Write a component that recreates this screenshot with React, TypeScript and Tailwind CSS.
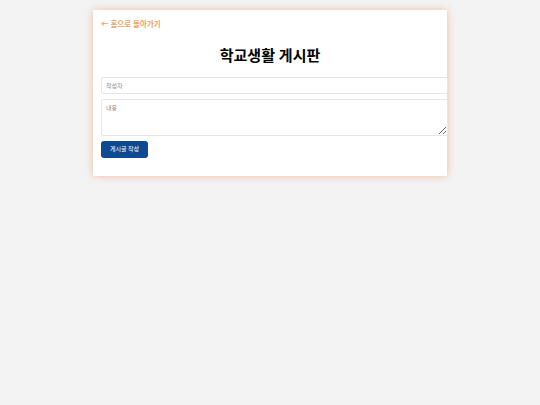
import React from "react";

const App: React.FC = () => {
  return (
    <div className="min-h-[405px] bg-[#f3f3f3] pt-[10px] font-['Noto_Sans','Noto_Sans_CJK_KR',sans-serif]">
      <div className="mx-auto w-[354px] bg-white px-2 pt-[9px] pb-[18px] shadow-[0_0_7px_rgba(240,150,90,0.6)]">
        <a className="block text-[7.5px] leading-[11px] font-semibold text-[#f3a262]">
          ← 홈으로 돌아가기
        </a>
        <h1 className="mt-[14px] text-center text-[15px] leading-[22px] font-bold text-black">
          학교생활 게시판
        </h1>
        <input
          placeholder="작성자"
          className="mt-[11px] block h-[17px] w-[347px] rounded-[2px] border border-[#e6e6e6] px-[4px] text-[6px] placeholder:text-[#8a8a8a] outline-none"
        />
        <textarea
          placeholder="내용"
          className="mt-[5px] block h-[37px] w-[347px] rounded-[2px] border border-[#e6e6e6] px-[4px] py-[4px] text-[6px] placeholder:text-[#8a8a8a] outline-none"
        />
        <button className="mt-[5px] block h-[17px] w-[47px] rounded-[3px] bg-[#0d4a91] text-[6px] text-white">
          게시글 작성
        </button>
      </div>
    </div>
  );
};

export default App;
